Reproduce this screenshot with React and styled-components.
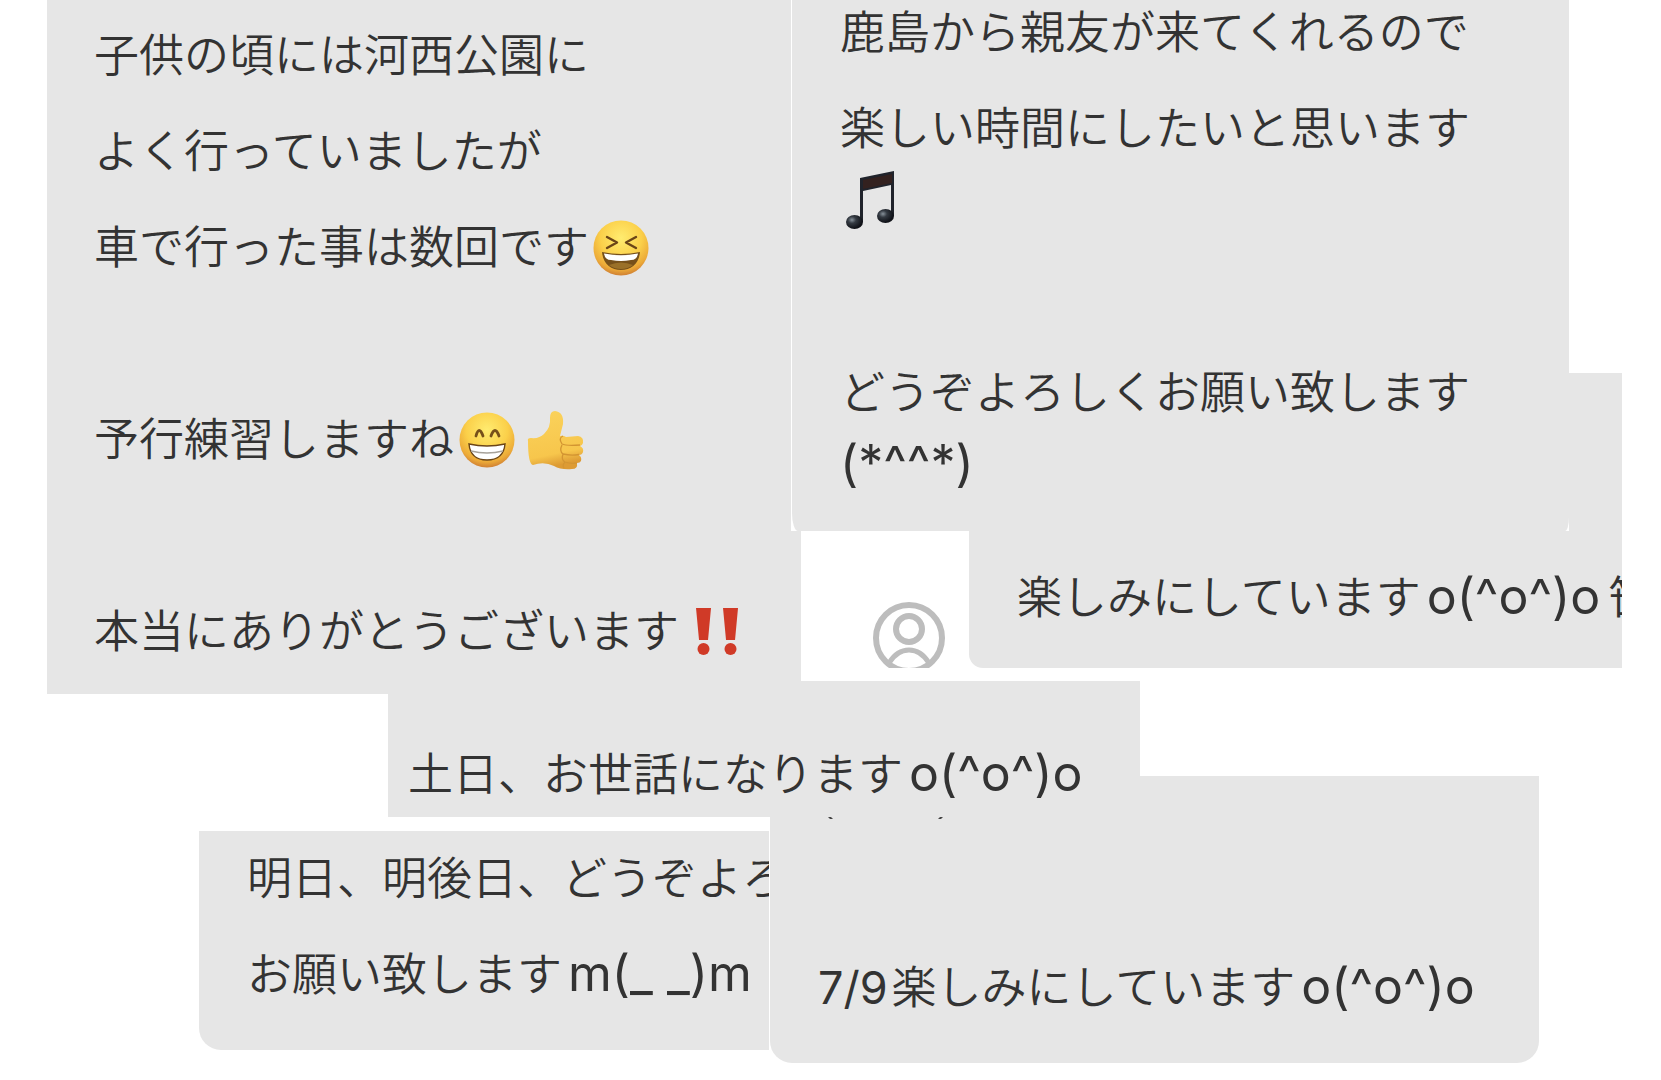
import React from "react";
import styled, { createGlobalStyle } from "styled-components";

const GlobalStyle = createGlobalStyle`
  body {
    margin: 0;
    background: #fff;
    color: #333;
    font-family: Inter, "Noto Sans CJK JP", sans-serif;
    font-size: 45px;
    line-height: 72px;
  }
`;

// The messages overlap like paper cuttings, so they share one grid
const Board = styled.main`
  display: grid;
  grid-template-columns: 47fr 152fr 189fr 381fr 22fr 10fr 168fr 171fr 399fr 30fr 53fr 39fr;
  grid-template-rows: 373px 158px 137px 13px 13px 82px 41px 14px 219px 13px 17px;
  overflow: hidden;
`;

const Cutting = styled.article`
  grid-column: ${({ $cols }) => $cols};
  grid-row: ${({ $rows }) => $rows};
  z-index: ${({ $layer }) => $layer || 1};
  display: flex;
  min-width: 0;
  background: #fff;
  padding-left: ${({ $edge }) => ($edge ? "1px" : "0")};
`;

const Bubble = styled.div`
  flex: 1;
  min-width: 0;
  display: flex;
  flex-direction: column;
  justify-content: flex-end;
  gap: 24px;
  box-sizing: border-box;
  overflow: hidden;
  background: #e6e6e6;
  padding: 0 0 ${({ $bottom }) => $bottom}px ${({ $left }) => $left || 48}px;
  border-radius: ${({ $radius }) => $radius || "0"};
`;

const Line = styled.p`
  flex: none;
  margin: 0;
  min-height: 72px;
  white-space: nowrap;
  font-weight: 350;
`;

const Face = styled.span`
  font-size: 50px;
  font-weight: 400;
  line-height: 1;
  margin: ${({ $gap }) => ($gap ? "0 8px 0 6px" : "0")};
`;

const DateText = styled.span`
  font-weight: 400;
  margin-right: 4px;
`;

const Emoji = styled.svg`
  width: 60px;
  height: 60px;
  margin-left: ${({ $gap }) => $gap || 0}px;
  vertical-align: -14px;
  overflow: visible;
`;

const AvatarBox = styled.div`
  grid-column: 7 / 8;
  grid-row: 3 / 4;
  z-index: 2;
  display: flex;
  justify-content: flex-end;
  align-items: flex-end;
  padding-right: 24px;
  background: #fff;
`;

// Tips of the line that the cutting above covers
const Remains = styled.svg`
  width: 128px;
  height: 4px;
  flex: none;
  margin-top: 41px;
  margin-bottom: auto;
`;

const YellowDefs = ({ id }) => (
  <defs>
    <radialGradient id={id} cx="0.5" cy="0.32" r="0.68">
      <stop offset="0" stopColor="#ffec70" />
      <stop offset="0.55" stopColor="#fbd04a" />
      <stop offset="0.85" stopColor="#ecaa38" />
      <stop offset="1" stopColor="#d08033" />
    </radialGradient>
  </defs>
);

const Laughing = () => (
  <Emoji $gap={2} viewBox="0 0 60 60" role="img" aria-label="laughing">
    <YellowDefs id="laugh" />
    <circle cx="30" cy="30" r="27.5" fill="url(#laugh)" />
    <path d="M16 19l10 5.5-10 5.5M45 19l-10 5.5 10 5.5" fill="none" stroke="#6b4517" strokeWidth="2.4" strokeLinecap="round" strokeLinejoin="round" />
    <path d="M11 34Q30 38 49 34C48 46 40 52 30 52S12 46 11 34z" fill="#76501a" />
    <path d="M13 35.5Q30 39 47 35.5Q46 42 40 42Q30 44 20 42Q14 42 13 35.5z" fill="#fff" />
    <path d="M18 47Q30 42 42 47Q37 51 30 51T18 47z" fill="#9a7028" />
  </Emoji>
);

const Grinning = () => (
  <Emoji $gap={3} viewBox="0 0 60 60" role="img" aria-label="grinning">
    <YellowDefs id="grin" />
    <circle cx="30" cy="30" r="27.5" fill="url(#grin)" />
    <path d="M19 26Q22 15 26 26M34 26Q38 15 42 26" fill="none" stroke="#76501a" strokeWidth="2.8" strokeLinecap="round" />
    <path d="M12 34Q30 38 48 34C47 45 40 50 30 50S13 45 12 34z" fill="#fff" stroke="#6b4517" strokeWidth="1.4" />
    <path d="M14 41Q30 45 46 41" fill="none" stroke="#a7a29a" strokeWidth="1.6" />
  </Emoji>
);

const ThumbsUp = () => (
  <Emoji $gap={8} viewBox="0 0 60 60" role="img" aria-label="thumbs up">
    <defs>
      <linearGradient id="thumb" x1="0" y1="0" x2="0.2" y2="1">
        <stop offset="0" stopColor="#fbd35c" />
        <stop offset="0.8" stopColor="#f7c64c" />
        <stop offset="1" stopColor="#dd9b34" />
      </linearGradient>
    </defs>
    <path d="M3 31Q2 28 6 28Q14 29 19 24Q26 17 25 8Q25 1 30 1Q39 2 38 14L35 26Q38 25 41 27L53 26Q59 27 58 33Q57 36 55 36Q59 38 58 42Q57 45 54 45Q57 47 56 51Q55 53 52 53Q53 59 47 59Q36 60 29 56Q19 51 8 55Q3 54 3 31z" fill="url(#thumb)" />
    <path d="M38 26Q33 28 37 34Q41 36 55 35M37 35Q34 41 38 44Q46 46 54 44.5M38 44Q36 50 40 52Q46 54 52 53M40 52Q37 55 39 58" fill="none" stroke="#d39532" strokeWidth="1.3" />
  </Emoji>
);

const Bangs = () => (
  <Emoji $gap={12} viewBox="0 0 60 60" role="img" aria-label="double exclamation">
    <g fill="#d03a27">
      <path d="M5 6h15l-3 32H8z" />
      <path d="M32 6h15l-3 32h-9z" />
      <circle cx="12.5" cy="47" r="6" />
      <circle cx="39.5" cy="47" r="6" />
    </g>
  </Emoji>
);

const Notes = () => (
  <Emoji viewBox="0 1 60 60" role="img" aria-label="music notes">
    <defs>
      <radialGradient id="note" cx="0.35" cy="0.35" r="0.6">
        <stop offset="0" stopColor="#87919a" />
        <stop offset="0.4" stopColor="#343a42" />
        <stop offset="1" stopColor="#111319" />
      </radialGradient>
    </defs>
    <path d="M20 8L54 1v45h-3V15L23 21v31h-3z" fill="#20232b" />
    <path d="M23 10L52 4v9L23 19z" fill="#33211f" />
    <ellipse cx="14.5" cy="52" rx="8.5" ry="7" fill="url(#note)" />
    <ellipse cx="45.5" cy="46" rx="8.5" ry="7" fill="url(#note)" />
  </Emoji>
);

const Avatar = () => (
  <svg width="72" height="66" viewBox="0 0 72 66" fill="none" stroke="#bdbdbd" strokeWidth="6" role="img" aria-label="user">
    <circle cx="36" cy="36" r="33" />
    <circle cx="36" cy="27" r="13" />
    <path d="M16 61Q24 48 36 48T56 61" strokeWidth="5" />
  </svg>
);

const App = () => (
  <>
    <GlobalStyle />
    <Board>
      <Cutting $cols="2 / 7" $rows="1 / 6">
        <Bubble $bottom={26} $left={47}>
          <Line>子供の頃には河西公園に</Line>
          <Line>よく行っていましたが</Line>
          <Line>車で行った事は数回です<Laughing /></Line>
          <Line />
          <Line>予行練習しますね<Grinning /><ThumbsUp /></Line>
          <Line />
          <Line>本当にありがとうございます<Bangs /></Line>
        </Bubble>
      </Cutting>

      <Cutting $cols="8 / 12" $rows="3 / 4">
        <Bubble $bottom={34} $radius="0 0 0 14px">
          <Line>
            楽しみにしています<Face $gap>o(^o^)o</Face>笹
          </Line>
        </Bubble>
      </Cutting>

      {/* upper part of the cutting on the right, showing past the next one */}
      <Cutting $cols="11 / 12" $rows="2 / 3">
        <Bubble $bottom={0} />
      </Cutting>

      <Cutting $cols="6 / 11" $rows="1 / 3" $layer={3} $edge>
        <Bubble $bottom={30} $radius="0 0 4px 6px / 0 0 14px 18px">
          <Line>鹿島から親友が来てくれるので</Line>
          <Line>
            楽しい時間にしたいと思います
            <br />
            <Notes />
          </Line>
          <Line />
          <Line>
            どうぞよろしくお願い致します
            <br />
            <Face>(*^^*)</Face>
          </Line>
        </Bubble>
      </Cutting>

      <AvatarBox>
        <Avatar />
      </AvatarBox>

      <Cutting $cols="4 / 9" $rows="5 / 8" $layer={3}>
        <Bubble $bottom={6} $left={20}>
          <Line>
            土日、お世話になります<Face $gap>o(^o^)o</Face>
          </Line>
        </Bubble>
      </Cutting>

      <Cutting $cols="3 / 5" $rows="9 / 10">
        <Bubble $bottom={39} $radius="0 0 0 22px">
          <Line>明日、明後日、どうぞよろ</Line>
          <Line>
            お願い致します<Face $gap>m(_ _)m</Face>
          </Line>
        </Bubble>
      </Cutting>

      <Cutting $cols="5 / 10" $rows="7 / 11" $layer={2} $edge>
        <Bubble $bottom={39} $radius="0 0 22px 22px">
          <Remains viewBox="0 0 128 4" aria-hidden="true">
            <path d="M10 0h3l2 2h-3zM125 0h-3l-2 2h3z" fill="#444" />
          </Remains>
          <Line>
            <DateText>7/9</DateText>楽しみにしています<Face $gap>o(^o^)o</Face>
          </Line>
        </Bubble>
      </Cutting>
    </Board>
  </>
);

export default App;
